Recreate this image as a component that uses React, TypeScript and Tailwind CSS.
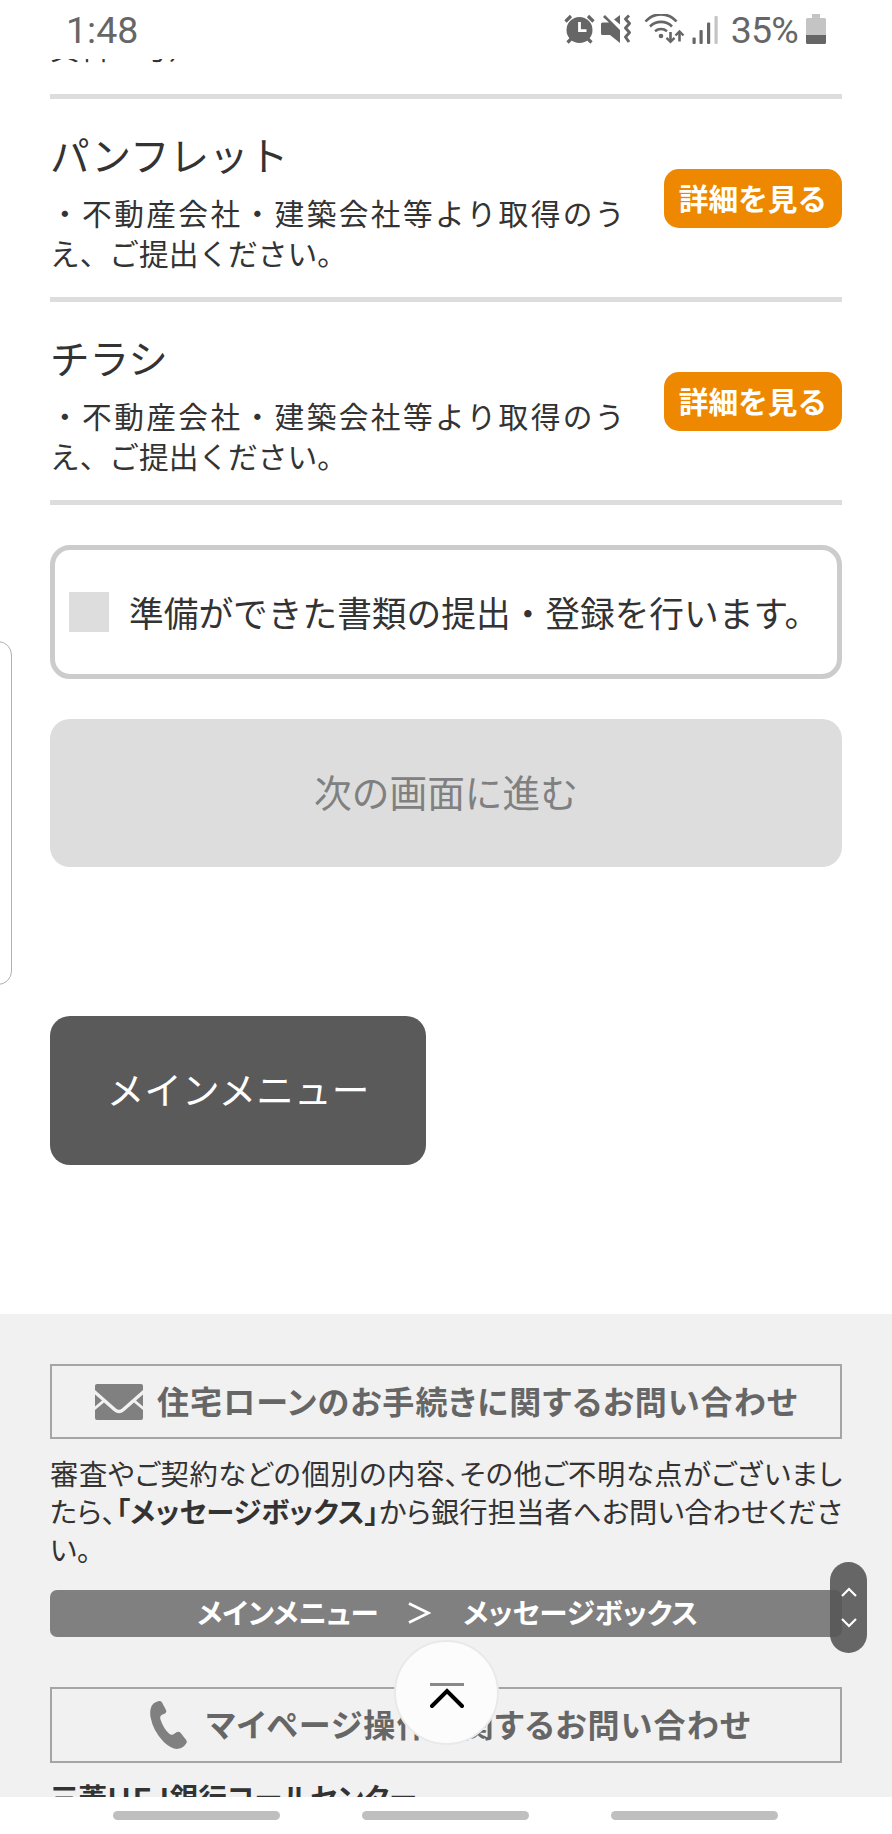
const documents = [
    { id: 1, name: "パンフレット" },
    { id: 2, name: "チラシ" },
];

const StatusBar = () => {
    return (
        <header className="relative z-10 flex h-[59px] shrink-0 items-start justify-between bg-white pl-[66px] pr-[66px] text-[#666]">
            <span className="mt-[9px] font-[Roboto] text-[37.5px] leading-[43px]">
                1:48
            </span>
            <div className="flex items-start">
                {/* alarm */}
                <svg
                    className="mt-[14px] h-[30px] w-[31px]"
                    viewBox="0 0 31 30"
                    fill="none"
                    stroke="currentColor"
                >
                    <circle cx="15.5" cy="16" r="13" fill="currentColor" stroke="none" />
                    <path d="M1.5 7.5 7 2M29.5 7.5 24 2M7 25l-3.5 3.5M24 25l3.5 3.5" strokeWidth="3.2" />
                    <path d="M15.5 8v8.7h7" stroke="#fff" strokeWidth="2.8" />
                </svg>
                {/* muted + vibrate */}
                <svg
                    className="ml-[6px] mt-[14px] h-[30px] w-[31px]"
                    viewBox="0 0 31 30"
                    fill="currentColor"
                >
                    <path d="M0 10a1.5 1.5 0 0 1 1.5-1.5H8L2 3l2-2 15 15v13L9 21H1.5A1.5 1.5 0 0 1 0 19.5z" />
                    <path d="M19 1v9.5L13 5.5z" />
                    <path
                        d="M28 1.500l-3.500 3.500 4 4.500-4 4.500 4 4.500-4 4.500 3.500 5"
                        fill="none"
                        stroke="currentColor"
                        strokeWidth="3"
                        strokeLinejoin="round"
                    />
                </svg>
                {/* wifi */}
                <svg
                    className="ml-[12px] mt-[14px] h-[31px] w-[41px]"
                    viewBox="0 0 41 31"
                    fill="none"
                    stroke="currentColor"
                    strokeWidth="2.6"
                >
                    <path d="M1.5 7.5a20.5 20.5 0 0 1 31 0M6 12.500a15.500 15.500 0 0 1 22 0M11 17.200a9.500 9.500 0 0 1 12 0" />
                    <circle cx="17" cy="22" r="2.3" fill="currentColor" stroke="none" />
                    <path d="M26.500 18v9M35.500 18.500v9" />
                    <path d="m22.500 23.800 4 4 4-4M31.500 21.500l4-4 4 4" strokeWidth="2.4" />
                </svg>
                {/* signal */}
                <svg
                    className="ml-[6px] mt-[15px] h-[29px] w-[27px]"
                    viewBox="0 0 27 29"
                    fill="currentColor"
                >
                    <rect x="1.500" y="22.500" width="3.200" height="6.500" rx="1" />
                    <rect x="8.500" y="15" width="3.200" height="14" rx="1" />
                    <rect x="16" y="7.500" width="3.200" height="21.500" rx="1" />
                    <rect x="23.500" y="1" width="3.200" height="28" rx="1" fill="#c4c4c4" />
                </svg>
                <span className="ml-[13px] mt-[9px] font-[Roboto] text-[37.5px] leading-[43px] tracking-[-0.8px]">
                    35%
                </span>
                {/* battery */}
                <svg className="ml-[8px] mt-[14px] h-[30px] w-[20px]" viewBox="0 0 20 30">
                    <path d="M6 0h8v4h4.5A1.5 1.5 0 0 1 20 5.500V21H0V5.500A1.500 1.500 0 0 1 1.500 4H6z" fill="#c4c4c4" />
                    <path d="M0 21h20v7.500a1.500 1.500 0 0 1-1.500 1.500h-17A1.500 1.500 0 0 1 0 28.500z" fill="currentColor" />
                </svg>
            </div>
        </header>
    );
};

const DocumentRow = ({ name }: { name: string }) => {
    return (
        <li className="flex h-[203.2px] justify-between border-b-[5px] border-[#ddd]">
            <div className="w-[574.5px] pt-[25px]">
                <p className="text-[39.6px] leading-[60px]">{name}</p>
                <p className="mt-[9px] text-justify text-[29.7px] leading-[40px]">
                    ・不動産会社・建築会社等より取得のうえ、ご提出ください。
                </p>
            </div>
            <button className="mt-[70px] h-[59px] w-[178px] rounded-[15px] bg-[#ee8800] pb-[2px] text-[29.7px] font-bold leading-[57px] text-white">
                詳細を見る
            </button>
        </li>
    );
};

const Footer = () => {
    return (
        <footer className="mt-[149px] h-[484px] shrink-0 bg-[#f1f1f1] px-[50px] pt-[50px] [font-feature-settings:'palt']">
            <div className="flex h-[75px] items-center border-2 border-[#a5a5a5] pl-[43px] text-[#666]">
                <svg className="h-[36px] w-[48px]" viewBox="0 0 48 36" fill="#808080">
                    <path d="M0 2a2 2 0 0 1 2-2h44a2 2 0 0 1 2 2v4L27 24.500q-3 2.500-6 0L0 6z" />
                    <path d="M0 10.500 7 16.500 0 22.500zM48 10.500 41 16.500 48 22.500z" />
                    <path d="M0 26 9 18.500l10 8.700q5 4 10 0l10-8.700 9 7.500V34a2 2 0 0 1-2 2H2a2 2 0 0 1-2-2z" />
                </svg>
                <p className="mb-[4px] ml-[14px] w-[640px] whitespace-nowrap text-[32px] font-bold [text-align-last:justify]">
                    住宅ローンのお手続きに関するお問い合わせ
                </p>
            </div>
            <div className="mt-[15px] w-[792px] whitespace-nowrap text-[28.3px] leading-[37.8px]">
                <p className="[text-align-last:justify]">
                    審査やご契約などの個別の内容、その他ご不明な点がございまし
                </p>
                <p className="[text-align-last:justify]">
                    たら、<b>「メッセージボックス」</b>から銀行担当者へお問い合わせくださ
                </p>
                <p>い。</p>
            </div>
            <div className="mt-[22px] flex h-[47px] items-center rounded-[7px] bg-[#808080] pl-[147px] text-[28.5px] font-bold text-white">
                <span className="mb-[2px] w-[178px] whitespace-nowrap [text-align-last:justify]">
                    メインメニュー
                </span>
                <svg className="ml-[33px] h-[22px] w-[23px]" viewBox="0 0 23 22" fill="none" stroke="#fff" strokeWidth="2.8">
                    <path d="M1 1.500 20.500 11 1 20.500" />
                </svg>
                <span className="mb-[2px] ml-[32px] w-[232px] whitespace-nowrap [text-align-last:justify]">
                    メッセージボックス
                </span>
            </div>
            <div className="mt-[50px] flex h-[76px] items-center border-2 border-[#a5a5a5] pl-[98px] text-[#666]">
                <svg className="h-[48px] w-[37px]" viewBox="0 0 37 48" fill="#808080">
                    <path d="M3.500 2.500Q6 .5 9 0q2-.3 3 1.500l4 7.500q1 2-1 3.500l-3.500 1.500q-2 1.500-1 4.500 3 9 8.500 14 2 2 4 1l4-2.500q2-1 3.500.8l5.500 7q1.500 2 0 4-3 4.500-8 5-6 .8-14-6.500Q3 30 .5 16-.8 6.500 3.500 2.500z" />
                </svg>
                <p className="mb-[4px] ml-[19px] w-[544px] whitespace-nowrap text-[32px] font-bold [text-align-last:justify]">
                    マイページ操作に関するお問い合わせ
                </p>
            </div>
            <p className="mt-[15px] w-[364px] whitespace-nowrap text-[28.5px] font-bold leading-[38px] [text-align-last:justify]">
                三菱ＵＦＪ銀行コールセンター
            </p>
        </footer>
    );
};

const App = () => {
    return (
        <div className="relative flex h-[1834px] w-[892px] flex-col overflow-hidden bg-white font-['Noto_Sans_CJK_JP',sans-serif] text-[#333]">
            <StatusBar />
            <main className="flex h-[1738px] shrink-0 flex-col overflow-hidden">
                <div className="mx-[50px] flex h-[40px] shrink-0 items-end border-b-[5px] border-[#ddd]">
                    <p className="mb-[27px] text-[29.7px] leading-[40px]">資料３号）</p>
                </div>
                <ul className="mx-[50px] shrink-0">
                    {documents.map((item) => (
                        <DocumentRow key={item.id} name={item.name} />
                    ))}
                </ul>
                <label className="mx-[50px] mt-[40px] flex h-[134px] shrink-0 items-center rounded-[20px] border-[5px] border-[#ccc] pl-[14px] text-[34.7px]">
                    <span className="size-[40px] bg-[#ddd]" />
                    <span className="mb-[1px] ml-[20px] whitespace-nowrap">
                        準備ができた書類の提出・登録を行います。
                    </span>
                </label>
                <button
                    disabled
                    className="mx-[50px] mt-[40px] h-[148px] shrink-0 rounded-[20px] bg-[#ddd] pb-[4px] text-[37.7px] text-[#808080]"
                >
                    次の画面に進む
                </button>
                <button className="ml-[50px] mt-[149px] h-[149px] w-[376px] shrink-0 rounded-[20px] bg-[#5a5a5a] pb-[5px] text-[37.7px] text-white">
                    メインメニュー
                </button>
                <Footer />
            </main>
            <nav className="relative flex h-[37px] shrink-0 gap-[82px] bg-white pl-[113px] pt-[14px]">
                <span className="h-[9px] w-[167px] rounded-full bg-[#bfbfbf]" />
                <span className="h-[9px] w-[167px] rounded-full bg-[#bfbfbf]" />
                <span className="h-[9px] w-[167px] rounded-full bg-[#bfbfbf]" />
            </nav>

            {/* edge panel handle */}
            <div className="absolute left-[-20px] top-[641px] h-[344px] w-[32px] rounded-[14px] border border-[#b0b0b0]" />

            {/* fast scroll */}
            <div className="absolute left-[830px] top-[1562px] flex h-[91px] w-[37px] flex-col items-center rounded-full bg-[#575757]/90 pt-[25px]">
                <svg className="h-[41px] w-[16px]" viewBox="0 0 16 41" fill="none" stroke="#fff" strokeWidth="2.2">
                    <path d="M1 9l7-7 7 7M1 32l7 7 7-7" />
                </svg>
            </div>

            {/* back to top */}
            <div className="absolute left-[394px] top-[1640px] flex size-[105px] justify-center rounded-full border-2 border-[#e9e9e9] bg-[#fcfcfc] pt-[41px]">
                <svg className="h-[26px] w-[34px]" viewBox="0 0 34 26" fill="none">
                    <path d="M0 1.500h34" stroke="#888" strokeWidth="3" />
                    <path d="M2 23 17 8l15 15" stroke="#000" strokeWidth="4" strokeLinecap="round" />
                </svg>
            </div>
        </div>
    );
};

export default App;
